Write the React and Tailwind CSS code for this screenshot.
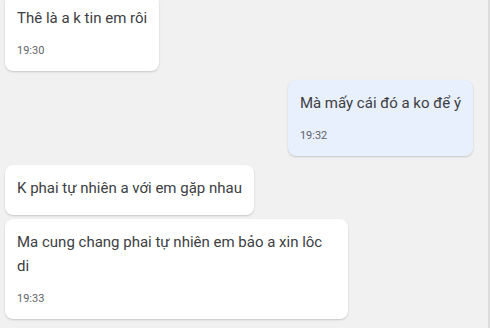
const messages = [
  { id: 1, text: "Thê là a k tin em rôi", time: "19:30", mine: false, gap: "" },
  { id: 2, text: "Mà mấy cái đó a ko để ý", time: "19:32", mine: true, gap: "mt-[9px]" },
  { id: 3, text: "K phai tự nhiên a với em gặp nhau", time: null, mine: false, gap: "mt-[9px]" },
  { id: 4, text: "Ma cung chang phai tự nhiên em bảo a xin lôc di", time: "19:33", mine: false, gap: "mt-[4px]" },
];

export default function App() {
  return (
    <div
      className="w-[490px] h-[328px] overflow-hidden bg-[#f1f1f1] border-r-2 border-[#dcdcdc]"
      style={{ fontFamily: "Roboto, 'Noto Sans', sans-serif" }}
    >
      <div className="flex flex-col -mt-[5px] px-[5px]">
        {messages.map((m) => (
          <div key={m.id} className={`flex ${m.mine ? "justify-end pr-[10px]" : "justify-start"} ${m.gap}`}>
            <div
              className={`max-w-[343px] rounded-lg px-3 pt-[11px] shadow-[0_1px_2px_rgba(0,0,0,0.18)] ${
                m.mine ? "bg-[#e8effd]" : "bg-white"
              } ${m.time ? "pb-[12px]" : "pb-[15px]"}`}
            >
              <div className="text-[15px] leading-6 text-[#3c4043]">{m.text}</div>
              {m.time && (
                <div className="mt-[13px] text-[11px] leading-4 text-[#5f6368]">{m.time}</div>
              )}
            </div>
          </div>
        ))}
      </div>
    </div>
  );
}
